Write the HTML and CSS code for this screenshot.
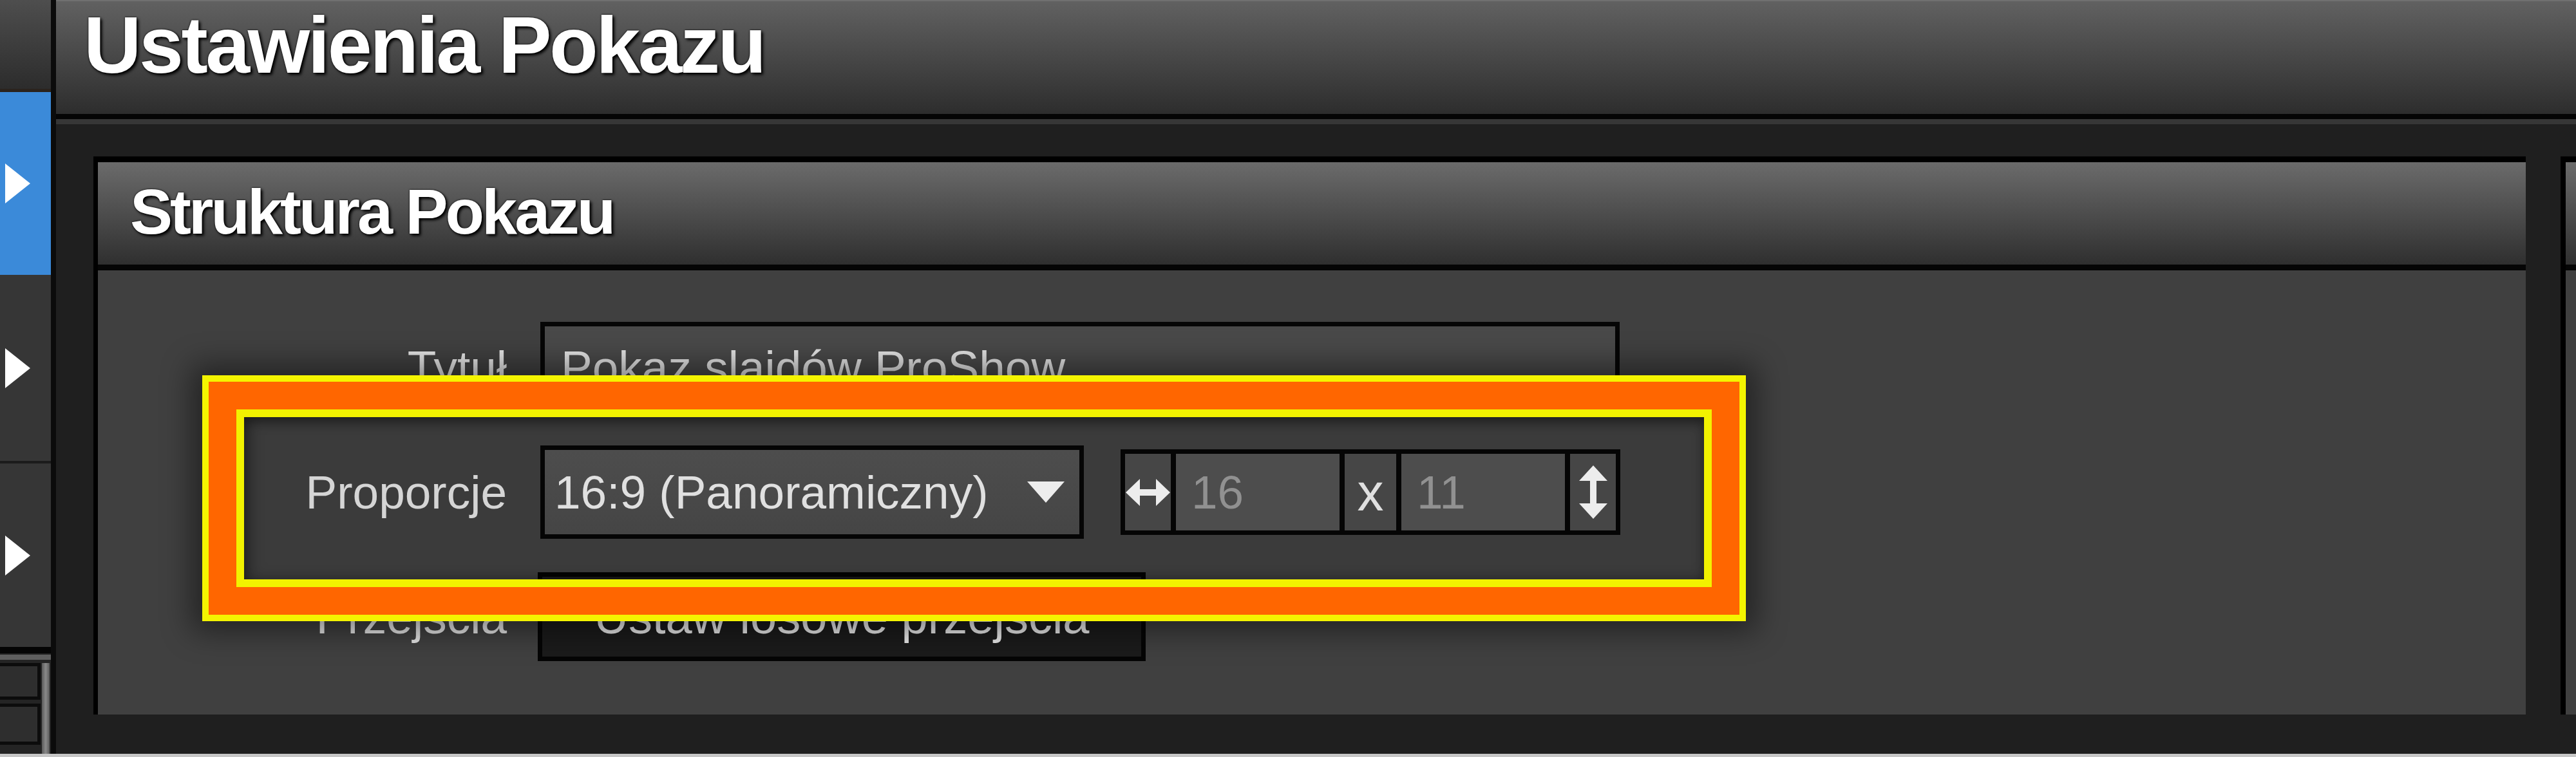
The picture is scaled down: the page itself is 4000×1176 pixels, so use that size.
FILE: index.html
```html
<!DOCTYPE html>
<html lang="pl">
<head>
<meta charset="utf-8">
<title>Ustawienia Pokazu</title>
<link rel="stylesheet" href="styles.css">
</head>
<body>
<div class="app">
  <aside class="sidebar">
    <div class="sb-top"></div>
    <div class="sb-item active">
      <svg class="sb-arrow" width="39" height="62" viewBox="0 0 39 62"><polygon points="0,0 39,31 0,62" fill="#fff"/></svg>
    </div>
    <div class="sb-item second">
      <svg class="sb-arrow" width="39" height="62" viewBox="0 0 39 62"><polygon points="0,0 39,31 0,62" fill="#fff"/></svg>
    </div>
    <div class="sb-item third">
      <svg class="sb-arrow" width="39" height="62" viewBox="0 0 39 62"><polygon points="0,0 39,31 0,62" fill="#fff"/></svg>
    </div>
    <div class="sb-bottom">
      <div class="sb-rule"></div>
      <div class="sb-tools">
        <div class="sb-boxes">
          <div class="sb-box one"></div>
          <div class="sb-box two"></div>
        </div>
        <div class="sb-scroll"></div>
      </div>
    </div>
  </aside>

  <main class="main">
    <header class="topbar">
      <h1 class="page-title">Ustawienia Pokazu</h1>
    </header>
    <div class="topbar-rule"></div>

    <div class="workspace">
      <section class="panel primary">
        <div class="panel-head">
          <h2 class="panel-title">Struktura Pokazu</h2>
        </div>
        <div class="panel-body">
          <div class="form">
            <div class="label">Tytuł</div>
            <div class="text-input">Pokaz slaidów ProShow</div>

            <div class="label">Proporcje</div>
            <div class="ratio-row">
              <div class="dropdown">
                <span class="dropdown-text">16:9 (Panoramiczny)</span>
                <svg class="caret" width="58" height="33" viewBox="0 0 58 33"><polygon points="0,0 58,0 29,33" fill="#fff"/></svg>
              </div>
              <div class="size-group">
                <div class="cell icon-cell">
                  <svg width="69" height="42" viewBox="0 0 69 42"><path d="M0 21 L22 0 L22 16 L47 16 L47 0 L69 21 L47 42 L47 26 L22 26 L22 42 Z" fill="#fff"/></svg>
                </div>
                <div class="cell value-cell">16</div>
                <div class="cell x-cell">x</div>
                <div class="cell value-cell">11</div>
                <div class="cell icon-cell">
                  <svg width="44" height="83" viewBox="0 0 44 83"><path d="M22 0 L44 24 L27 24 L27 59 L44 59 L22 83 L0 59 L17 59 L17 24 L0 24 Z" fill="#fff"/></svg>
                </div>
              </div>
            </div>

            <div class="label">Przejścia</div>
            <div class="button">Ustaw losowe przejścia</div>
          </div>

          <div class="callout">
            <div class="callout-mid">
              <div class="callout-inner"></div>
            </div>
          </div>
        </div>
      </section>

      <section class="panel secondary">
        <div class="panel-head"></div>
        <div class="panel-body"></div>
      </section>
    </div>
  </main>
</div>
<div class="bottom-strip"></div>
</body>
</html>
```

FILE: styles.css
```css
* { box-sizing: border-box; }

html, body {
  margin: 0;
  padding: 0;
}

body {
  width: 4000px;
  height: 1176px;
  overflow: hidden;
  background: #1f1f1f;
  font-family: "Liberation Sans", Arial, sans-serif;
  color: #e8e8e8;
}

.app {
  display: flex;
  height: 1171px;
}

/* ---------- sidebar ---------- */
.sidebar {
  width: 87px;
  flex-shrink: 0;
  border-right: 8px solid #0b0b0b;
  display: flex;
  flex-direction: column;
  background: #2a2a2a;
}

.sb-top {
  height: 143px;
  background: linear-gradient(#4e4e4e, #2c2c2c);
  border-bottom: 5px solid #2b231d;
}

.sb-item {
  display: flex;
  align-items: center;
  padding-left: 8px;
  background: #363636;
}

.sb-item.active {
  height: 284px;
  background: #3b8ad9;
}

.sb-item.second {
  height: 289px;
}

.sb-item.third {
  height: 289px;
  border-top: 4px solid #1b1b1b;
}

.sb-bottom {
  flex: 1;
  border-top: 10px solid #050505;
  background: #242424;
  display: flex;
  flex-direction: column;
}

.sb-rule {
  height: 8px;
  margin-top: 2px;
  background: #5e5e5e;
}

.sb-tools {
  flex: 1;
  display: flex;
  padding-top: 5px;
}

.sb-boxes {
  width: 63px;
  display: flex;
  flex-direction: column;
  gap: 6px;
}

.sb-box {
  border: 5px solid #0c0c0c;
  border-left: none;
  background: #2e2e2e;
}

.sb-box.one { height: 57px; }
.sb-box.two { height: 64px; }

.sb-scroll {
  width: 12px;
  margin-left: 2px;
  background: linear-gradient(90deg, #5a5a5a, #8a8a8a, #5a5a5a);
}

/* ---------- main ---------- */
.main {
  flex: 1;
  display: flex;
  flex-direction: column;
  min-width: 0;
}

.topbar {
  height: 185px;
  border-top: 2px solid #707070;
  border-bottom: 8px solid #050505;
  background: linear-gradient(#616161, #2d2d2d);
  padding-left: 43px;
}

.page-title {
  margin: 0;
  font-size: 124px;
  font-weight: bold;
  letter-spacing: -3.5px;
  line-height: 136px;
  color: #ffffff;
  text-shadow: 3px 3px 4px #000, 0 0 3px #000;
}

.topbar-rule {
  height: 8px;
  background: #363636;
}

.workspace {
  flex: 1;
  display: flex;
  gap: 54px;
  padding: 50px 0 0 58px;
  overflow: hidden;
}

.panel {
  flex-shrink: 0;
  height: 867px;
  display: flex;
  flex-direction: column;
  border-left: 7px solid #000;
  border-top: 9px solid #000;
  background: #404040;
}

.panel.primary { width: 3777px; }
.panel.secondary { width: 200px; border-left-width: 8px; }

.panel-head {
  height: 168px;
  flex-shrink: 0;
  border-bottom: 9px solid #050505;
  background: linear-gradient(#6b6b6b, #2f2f2f);
  padding-left: 50px;
}

.panel-title {
  margin: 0;
  font-size: 99px;
  font-weight: bold;
  letter-spacing: -4px;
  line-height: 153px;
  color: #ffffff;
  text-shadow: 3px 3px 4px #000, 0 0 3px #000;
}

.panel-body {
  flex: 1;
  position: relative;
  padding-top: 80px;
}

/* ---------- form ---------- */
.form {
  display: grid;
  grid-template-columns: 635px max-content;
  column-gap: 52px;
  row-gap: 52px;
  align-items: center;
}

.label {
  text-align: right;
  font-size: 73px;
  color: #e6e6e6;
}

.text-input {
  width: 1676px;
  height: 140px;
  border: 7px solid #060606;
  background: #494949;
  display: flex;
  align-items: center;
  padding-left: 25px;
  font-size: 73px;
  color: #e4e4e4;
}

.ratio-row {
  display: flex;
  align-items: center;
  gap: 57px;
}

.dropdown {
  width: 844px;
  height: 145px;
  border: 7px solid #060606;
  background: linear-gradient(#535353, #4b4b4b);
  display: flex;
  align-items: center;
  justify-content: space-between;
  padding: 0 23px 0 15px;
  font-size: 73px;
  color: #f2f2f2;
}

.size-group {
  display: flex;
  height: 133px;
  border: 7px solid #060606;
  background: #060606;
  gap: 8px;
}

.cell {
  display: flex;
  align-items: center;
  background: #4c4c4c;
}

.icon-cell {
  width: 71px;
  justify-content: center;
}

.value-cell {
  width: 254px;
  background: #535353;
  padding-left: 24px;
  font-size: 73px;
  color: #9c9c9c;
}

.x-cell {
  width: 80px;
  justify-content: center;
  font-size: 82px;
  color: #f2f2f2;
}

.button {
  width: 944px;
  height: 138px;
  margin-left: -4px;
  border: 7px solid #050505;
  background: #1b1b1b;
  display: flex;
  align-items: center;
  justify-content: center;
  font-size: 74px;
  color: #eaeaea;
}

/* ---------- highlight callout ---------- */
.callout {
  position: absolute;
  left: 162px;
  top: 163px;
  width: 2397px;
  height: 382px;
  border: 10px solid #f4f400;
  box-shadow: 0 0 44px 16px rgba(0, 0, 0, 0.45);
  pointer-events: none;
}

.callout-mid {
  height: 100%;
  border: 43px solid #ff6600;
}

.callout-inner {
  height: 100%;
  border: 12px solid #f2f200;
  background: rgba(0, 0, 0, 0.07);
  box-shadow: inset 0 8px 18px rgba(0, 0, 0, 0.4), inset 10px 0 22px rgba(0, 0, 0, 0.25);
}

.bottom-strip {
  height: 5px;
  background: #c6c6c6;
}
```
